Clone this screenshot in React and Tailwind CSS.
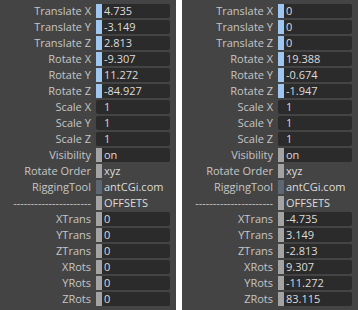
const left = [
  { label: "Translate X", value: "4.735", bar: "blue", field: true },
  { label: "Translate Y", value: "-3.149", bar: "blue", field: true },
  { label: "Translate Z", value: "2.813", bar: "blue", field: true },
  { label: "Rotate X", value: "-9.307", bar: "blue", field: true },
  { label: "Rotate Y", value: "11.272", bar: "blue", field: true },
  { label: "Rotate Z", value: "-84.927", bar: "blue", field: true },
  { label: "Scale X", value: "1", field: true },
  { label: "Scale Y", value: "1", field: true },
  { label: "Scale Z", value: "1", field: true },
  { label: "Visibility", value: "on", bar: "grey", field: true },
  { label: "Rotate Order", value: "xyz", bar: "grey" },
  { label: "RiggingTool", value: "antCGi.com", bar: "slate" },
  { label: "----------------------", value: "OFFSETS", bar: "grey" },
  { label: "XTrans", value: "0", bar: "grey", field: true },
  { label: "YTrans", value: "0", bar: "grey", field: true },
  { label: "ZTrans", value: "0", bar: "grey", field: true },
  { label: "XRots", value: "0", bar: "grey", field: true },
  { label: "YRots", value: "0", bar: "grey", field: true },
  { label: "ZRots", value: "0", bar: "grey", field: true },
];

const rightValues = [
  "0", "0", "0", "19.388", "-0.674", "-1.947", "1", "1", "1", "on", "xyz", "antCGi.com", "OFFSETS",
  "-4.735", "3.149", "-2.813", "9.307", "-11.272", "83.115",
];

const right = left.map((r, i) => ({ ...r, value: rightValues[i] }));

function Bar({ kind }) {
  if (kind === "blue") return <div className="h-full w-[6px] shrink-0 bg-[#9ec6ee]" />;
  if (kind === "grey") return <div className="h-full w-[6px] shrink-0 bg-[#a3a3a3]" />;
  if (kind === "slate") return <div className="h-full w-[6px] shrink-0 bg-[#5c6772]" />;
  return null;
}

function Row({ row }) {
  return (
    <div className="flex h-[16px] items-center">
      <div className="w-[91px] shrink-0 whitespace-nowrap text-right leading-[14px] text-[#c6c6c6]">
        {row.label}
      </div>
      <div
        className={
          "ml-[5px] flex h-[14px] w-[74px] items-center rounded-[2px] " +
          (row.field ? "bg-[#2b2b2b]" : "bg-transparent")
        }
      >
        <Bar kind={row.bar} />
        <div className={(row.bar ? "pl-[2px]" : "pl-[8px]") + " whitespace-nowrap leading-[14px] text-[#dcdcdc]"}>
          {row.value}
        </div>
      </div>
    </div>
  );
}

function Panel({ rows }) {
  return (
    <div className="h-[310px] w-[176px] bg-[#444444] pt-[3px]">
      {rows.map((r, i) => (
        <Row key={i} row={r} />
      ))}
    </div>
  );
}

export default function App() {
  return (
    <div
      className="flex h-[310px] w-[358px] gap-[6px] bg-white text-[11px]"
      style={{ fontFamily: '"Open Sans", "DejaVu Sans", sans-serif' }}
    >
      <Panel rows={left} />
      <Panel rows={right} />
    </div>
  );
}
